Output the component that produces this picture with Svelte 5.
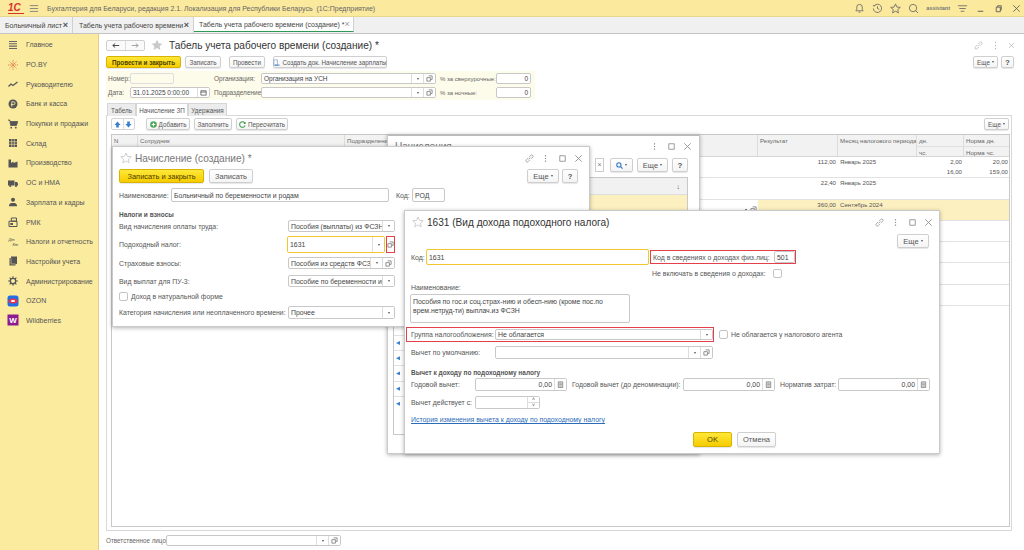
<script>
  const tabs = [
    { title: 'Больничный лист', cls: 'tab-a' },
    { title: 'Табель учета рабочего времени', cls: 'tab-b' },
    { title: 'Табель учета рабочего времени (создание) *', cls: 'tab-c', active: true }
  ];

  const sections = [
    ['lines', 'Главное'],
    ['poby', 'РО.BY'],
    ['trend', 'Руководителю'],
    ['coin', 'Банк и касса'],
    ['cart', 'Покупки и продажи'],
    ['store', 'Склад'],
    ['factory', 'Производство'],
    ['truck', 'ОС и НМА'],
    ['person', 'Зарплата и кадры'],
    ['till', 'РМК'],
    ['tax', 'Налоги и отчетность'],
    ['docs', 'Настройки учета'],
    ['gear', 'Администрирование'],
    ['ozon', 'OZON'],
    ['wb', 'Wildberries']
  ];

  const rows = [
    { result: '112,00', month: 'Январь 2025', d: '2,00', n: '20,00', h: '16,00', nh: '159,00' },
    { result: '22,40', month: 'Январь 2025' },
    { result: '360,00', month: 'Сентябрь 2024', current: true },
    {}, {}, {}, {}
  ];
</script>

{#snippet open()}
  <svg class="ico" viewBox="0 0 8 8"><path d="M3 1h4v4H5.500M1 3h4v4H1z" fill="none" stroke="#666" stroke-width=".8"/></svg>
{/snippet}

{#snippet calc()}
  <svg class="ico" viewBox="0 0 8 8"><path d="M1.500 1h5v6.500h-5zM2.500 2.500h3M2.500 4.200h3M2.500 5.800h3" fill="none" stroke="#666" stroke-width=".8"/></svg>
{/snippet}

{#snippet field(text, opts = {})}
  <div class="fld {opts.cls ?? ''}">
    <span class="val" class:num={opts.num}>{text}</span>
    {#if opts.arrow}<span class="fbtn"><i class="tri"></i></span>{/if}
    {#if opts.open}<span class="fbtn">{@render open()}</span>{/if}
    {#if opts.calc}<span class="fbtn">{@render calc()}</span>{/if}
    {#if opts.date}<span class="fbtn"><svg class="ico" viewBox="0 0 8 8"><path d="M1 2h6v5H1zM1 3.500h6" fill="none" stroke="#555" stroke-width=".9"/></svg></span>{/if}
    {#if opts.spin}<span class="fbtn spin"><i>˄</i><i>˅</i></span>{/if}
  </div>
{/snippet}

{#snippet wincontrols(link = true)}
  <div class="wctl">
    {#if link}
      <svg class="wi" viewBox="0 0 12 12"><path d="M5 7l2-2M4.500 5.500L2.500 7.500a1.400 1.400 0 0 0 2 2l2-2M7.500 6.500l2-2a1.400 1.400 0 0 0-2-2l-2 2" fill="none" stroke="#999" stroke-width=".9"/></svg>
    {/if}
    <svg class="wi" viewBox="0 0 12 12"><path d="M6 2.500v1.200M6 5.400v1.200M6 8.300v1.200" stroke="#888" stroke-width="1.300"/></svg>
    <svg class="wi" viewBox="0 0 12 12"><path d="M3 3h6v6H3z" fill="none" stroke="#888" stroke-width=".9"/></svg>
    <svg class="wi" viewBox="0 0 12 12"><path d="M2.500 2.500l7 7M9.500 2.500l-7 7" stroke="#888" stroke-width=".9"/></svg>
  </div>
{/snippet}

{#snippet star()}
  <svg class="star" viewBox="0 0 12 12"><path d="M6 1l1.500 3.400 3.700.4-2.800 2.400.8 3.600L6 8.900 2.800 10.800l.8-3.600L.8 4.800l3.700-.4z" fill="none" stroke="#c4c4c4" stroke-width=".8"/></svg>
{/snippet}

{#snippet sectionIcon(name)}
  <svg class="si" viewBox="0 0 12 12">
    {#if name === 'lines'}
      <path d="M2 2.500h8M2 4.800h8M2 7.100h8M2 9.500h8" stroke="#666" stroke-width="1.100"/>
    {:else if name === 'poby'}
      <path d="M6 1v10M1 6h10M2.500 2.500l7 7M9.500 2.500l-7 7" stroke="#e0703a" stroke-width=".8" stroke-dasharray="1.500 .7"/>
    {:else if name === 'trend'}
      <path d="M1.500 8.500l2.500-2.500 2 1.500L10.500 4" fill="none" stroke="#555" stroke-width="1.300"/>
    {:else if name === 'coin'}
      <circle cx="6" cy="6" r="4.500" fill="#555"/><path d="M4.800 8.800V3.800h1.800a1.400 1.400 0 0 1 0 2.800H3.800" fill="none" stroke="#fbeb9f" stroke-width=".9"/>
    {:else if name === 'cart'}
      <path d="M1 2h1.800l.8 5.500h5.900l1.200-4H3.200" fill="#555" stroke="#555" stroke-width=".8"/><circle cx="4.200" cy="9.700" r=".9" fill="#555"/><circle cx="8.800" cy="9.700" r=".9" fill="#555"/>
    {:else if name === 'store'}
      <path d="M2 2h8v8H2z" fill="#555"/><path d="M2 4.700h8M2 7.300h8M4.700 2v8M7.300 2v8" stroke="#fbeb9f" stroke-width=".6"/>
    {:else if name === 'factory'}
      <path d="M1.500 10.500V2.500h2.500v3.500l2.500-1.500V6l4-1.500v6z" fill="#555"/>
    {:else if name === 'truck'}
      <path d="M1 3.500h6.500v5H1zM8 5h2l1 1.500v2H8z" fill="#555"/><circle cx="3.200" cy="9" r="1.100" fill="#555"/><circle cx="9" cy="9" r="1.100" fill="#555"/>
    {:else if name === 'person'}
      <circle cx="6" cy="3.700" r="2" fill="#555"/><path d="M2 10.200c0-2.700 1.800-3.200 4-3.200s4 .5 4 3.200z" fill="#555"/>
    {:else if name === 'till'}
      <path d="M2 5.200h8v5.300H2zM4.300 2h5.200v3.200H4.300z" fill="none" stroke="#555" stroke-width="1"/><path d="M3.300 7h2.700v2H3.300z" fill="#555"/>
    {:else if name === 'tax'}
      <text x="1.500" y="5" class="si-t">Дт</text><text x="5.500" y="10" class="si-t">Кт</text>
    {:else if name === 'docs'}
      <path d="M4 1.500h6v7.500H8.500v1.500h-6V3H4z" fill="#555"/><path d="M4 3v6h4.500" fill="none" stroke="#fbeb9f" stroke-width=".5"/>
    {:else if name === 'gear'}
      <circle cx="6" cy="6" r="2.700" fill="none" stroke="#555" stroke-width="1.300"/><path d="M6 1.200v1.800M6 9v1.800M1.200 6H3M9 6h1.800M2.600 2.600l1.300 1.300M8.100 8.100l1.300 1.300M9.400 2.600L8.100 3.900M3.900 8.100L2.600 9.400" stroke="#555" stroke-width="1.100"/>
    {:else if name === 'ozon'}
      <rect x=".5" y=".5" width="11" height="11" rx="2.500" fill="#1f6fe5"/><ellipse cx="6" cy="6" rx="4.500" ry="2.500" fill="#e8304a"/><ellipse cx="6" cy="6" rx="2.200" ry="1" fill="#fff"/>
    {:else if name === 'wb'}
      <rect x=".5" y=".5" width="11" height="11" fill="#8d1b8f"/><text x="6" y="9" class="si-w">W</text>
    {/if}
  </svg>
{/snippet}

<div class="app">
  <header class="topbar">
    <span class="logo">1С</span>
    <svg class="burger" viewBox="0 0 12 10"><path d="M1 1.500h10M1 5h10M1 8.500h10" stroke="#777" stroke-width="1"/></svg>
    <span class="apptitle">Бухгалтерия для Беларуси, редакция 2.1. Локализация для Республики Беларусь&nbsp; (1С:Предприятие)</span>
    <div class="topicons">
      <svg class="ti" viewBox="0 0 12 12"><path d="M6 1.500a3 3 0 0 0-3 3V7L2 8.500h8L9 7V4.500a3 3 0 0 0-3-3zM5 10h2" fill="none" stroke="#666" stroke-width=".9"/></svg>
      <svg class="ti" viewBox="0 0 12 12"><path d="M2.500 3a4.500 4.500 0 1 1-1 3M1 2.500L2.500 3.500 3.500 2M6 3.500V6l2 1" fill="none" stroke="#666" stroke-width=".9"/></svg>
      <svg class="ti" viewBox="0 0 12 12"><path d="M6 1l1.500 3.400 3.700.4-2.800 2.400.8 3.600L6 8.900 2.800 10.800l.8-3.600L.8 4.800l3.700-.4z" fill="none" stroke="#666" stroke-width=".9"/></svg>
      <svg class="ti" viewBox="0 0 12 12"><circle cx="5.500" cy="5.500" r="4" fill="none" stroke="#666" stroke-width=".9"/><path d="M8.500 8.500l2.500 2.500" stroke="#666" stroke-width=".9"/></svg>
      <span class="user">assistant</span>
      <svg class="ti" viewBox="0 0 12 12"><path d="M1 3h10M2.500 6h7M4 9h4" stroke="#666" stroke-width=".9"/></svg>
      <svg class="ti" viewBox="0 0 12 12"><path d="M3 9h6" stroke="#555" stroke-width="1"/></svg>
      <svg class="ti" viewBox="0 0 12 12"><path d="M3.500 4.500h4.500v5H3.500zM5 4.500V3h4v4.500H8" fill="none" stroke="#555" stroke-width=".9"/></svg>
      <svg class="ti" viewBox="0 0 12 12"><path d="M2.500 2.500l7 7M9.500 2.500l-7 7" stroke="#555" stroke-width=".9"/></svg>
    </div>
  </header>

  <nav class="tabbar">
    {#each tabs as t}
      <div class="doctab {t.cls}" class:active={t.active}>
        <span>{t.title}</span><b>×</b>
      </div>
    {/each}
  </nav>

  <div class="body">
    <aside class="side">
      {#each sections as [icon, label]}
        <div class="side-item">
          {@render sectionIcon(icon)}
          <span>{label}</span>
        </div>
      {/each}
    </aside>

    <main class="page">
      <div class="title-row">
        <div class="navbtns">
          <span class="nb"><svg viewBox="0 0 10 8"><path d="M1 4h8M1 4l3-2.500M1 4l3 2.500" fill="none" stroke="#333" stroke-width="1.100"/></svg></span>
          <span class="nb"><svg viewBox="0 0 10 8"><path d="M1 4h8M9 4L6 1.500M9 4L6 6.500" fill="none" stroke="#999" stroke-width="1.100"/></svg></span>
        </div>
        <svg class="bigstar" viewBox="0 0 12 12"><path d="M6 .8l1.600 3.500 3.800.4-2.800 2.500.8 3.800L6 9l-3.400 2 .8-3.800L.6 4.700l3.800-.4z" fill="#c9c9c9"/></svg>
        <h1>Табель учета рабочего времени (создание) *</h1>
        <div class="wctl pale">
          <svg class="wi" viewBox="0 0 12 12"><path d="M5 7l2-2M4.500 5.500L2.500 7.500a1.400 1.400 0 0 0 2 2l2-2M7.500 6.500l2-2a1.400 1.400 0 0 0-2-2l-2 2" fill="none" stroke="#bbb" stroke-width=".9"/></svg>
          <svg class="wi" viewBox="0 0 12 12"><path d="M6 2v1.400M6 5.300v1.400M6 8.600V10" stroke="#bbb" stroke-width="1.200"/></svg>
          <svg class="wi" viewBox="0 0 12 12"><path d="M3.500 3.500l5 5M8.500 3.500l-5 5" stroke="#bbb" stroke-width=".9"/></svg>
        </div>
      </div>

      <div class="cmd-row">
        <button class="btn primary w-post">Провести и закрыть</button>
        <button class="btn w-save">Записать</button>
        <button class="btn w-post2">Провести</button>
        <button class="btn w-create">
          <svg class="ico" viewBox="0 0 8 8"><path d="M1 1h4v6H1z" fill="#fff" stroke="#6a8fc0" stroke-width=".7"/><path d="M2 7h5.500" stroke="#3a70b8"/></svg>
          Создать док. Начисление зарплаты
        </button>
        <div class="right-tools">
          <button class="btn w-more">Еще <i class="tri"></i></button>
          <button class="btn w-help">?</button>
        </div>
      </div>

      <section class="head-form">
        <div class="form-row">
          <label class="col-a" for="doc-no">Номер:</label>
          <input id="doc-no" class="num-input" readonly />
          <span class="lb-org">Организация:</span>
          {@render field('Организация на УСН', { cls: 'org', arrow: true, open: true })}
          <span class="lb-pct">% за сверхурочные:</span>
          {@render field('0', { num: true, cls: 'pct' })}
        </div>
        <div class="form-row">
          <span class="col-a">Дата:</span>
          {@render field('31.01.2025  0:00:00', { cls: 'date', date: true })}
          <span class="lb-org near">Подразделение:</span>
          {@render field('', { cls: 'org', arrow: true, open: true })}
          <span class="lb-pct">% за ночные:</span>
          {@render field('0', { num: true, cls: 'pct' })}
        </div>
      </section>

      <div class="tabstrip">
        <span class="ptab t1">Табель</span>
        <span class="ptab t2 on">Начисление ЗП</span>
        <span class="ptab t3">Удержания</span>
      </div>

      <section class="panel">
        <div class="table-tools">
          <div class="updown">
            <span><svg viewBox="0 0 8 8"><path d="M4 .5L7.500 4.500H5.500V7.500h-3V4.500H.5z" fill="#3a7fd0"/></svg></span>
            <span><svg viewBox="0 0 8 8"><path d="M4 7.500L7.500 3.500H5.500V.5h-3v3H.5z" fill="#3a7fd0"/></svg></span>
          </div>
          <button class="btn w-add">
            <svg class="ico" viewBox="0 0 8 8"><circle cx="4" cy="4" r="3.800" fill="#4aa85a"/><path d="M4 2v4M2 4h4" stroke="#fff" stroke-width="1.200"/></svg>
            Добавить
          </button>
          <button class="btn w-fill">Заполнить</button>
          <button class="btn w-calc">
            <svg class="ico" viewBox="0 0 8 8"><path d="M6.800 2.500A3.200 3.200 0 1 0 7 5" fill="none" stroke="#3d9a4e" stroke-width="1.200"/><path d="M7.500.8v2.500H5z" fill="#3d9a4e"/></svg>
            Пересчитать
          </button>
          <button class="btn w-more table-more">Еще <i class="tri"></i></button>
        </div>

        <div class="grid">
          <div class="gr ghead">
            <span>N</span><span>Сотрудник</span><span>Подразделение</span><span>Результат</span>
            <span>Месяц налогового периода</span>
            <span class="split"><em>дн.</em><em>чс.</em></span>
            <span class="split"><em>Норма дн.</em><em>Норма чс.</em></span>
          </div>
          {#each rows as r}
            <div class="gr grow" class:current={r.current}>
              <span></span><span></span>
              <span class="dept">
                {#if r.current}<i class="cellbtns"><i class="tri"></i>{@render open()}</i>{/if}
              </span>
              <span class="r">{r.result ?? ''}</span>
              <span>{r.month ?? ''}</span>
              <span class="r split"><em>{r.d ?? ''}</em><em>{r.h ?? ''}</em></span>
              <span class="r split"><em>{r.n ?? ''}</em><em>{r.nh ?? ''}</em></span>
            </div>
          {/each}
        </div>
      </section>

      <div class="foot-row">
        <span class="lb-resp">Ответственное лицо:</span>
        {@render field('', { cls: 'resp', arrow: true, open: true })}
      </div>
    </main>
  </div>

  <!-- window behind: pick list -->
  <section class="win win-back">
    <div class="winhead">
      <span class="wtitle dim">Начисления</span>
      {@render wincontrols(false)}
    </div>
    <div class="back-tools">
      <span class="clearbox">×</span>
      <button class="btn w-find">
        <svg class="ico" viewBox="0 0 8 8"><circle cx="3.300" cy="3.300" r="2.400" fill="none" stroke="#2f74c4" stroke-width="1.200"/><path d="M5 5l2.500 2.500" stroke="#2f74c4" stroke-width="1.200"/></svg>
        <i class="tri"></i>
      </button>
      <button class="btn w-more2">Еще <i class="tri"></i></button>
      <button class="btn w-help2">?</button>
    </div>
    <div class="back-table">
      <div class="back-head"><span>↓</span></div>
      <div class="back-sel"></div>
      <div class="back-spacer"></div>
      {#each [0, 1, 2, 3, 4] as i}
        <div class="back-row"><i class="mark"></i></div>
      {/each}
    </div>
  </section>

  <!-- accrual window -->
  <section class="win win-acc">
    <div class="winhead">
      {@render star()}
      <span class="wtitle dim">Начисление (создание) *</span>
      {@render wincontrols()}
    </div>
    <div class="acc-tools">
      <button class="btn primary big w-wc">Записать и закрыть</button>
      <button class="btn big w-w">Записать</button>
      <div class="right-tools">
        <button class="btn big w-m">Еще <i class="tri"></i></button>
        <button class="btn big w-q">?</button>
      </div>
    </div>
    <div class="acc-name">
      <span class="lb-name">Наименование:</span>
      {@render field('Больничный по беременности и родам', { cls: 'name' })}
      <span class="lb-code">Код:</span>
      {@render field('РОД', { cls: 'code' })}
    </div>
    <h3 class="group g-acc">Налоги и взносы</h3>
    <div class="acc-row r1"><span>Вид начисления оплаты труда:</span>{@render field('Пособия (выплаты) из ФСЗН', { arrow: true })}</div>
    <div class="acc-row r2">
      <span>Подоходный налог:</span>
      {@render field('1631', { arrow: true, cls: 'focus' })}
      <span class="redbtn">{@render open()}</span>
    </div>
    <div class="acc-row r3"><span>Страховые взносы:</span>{@render field('Пособия из средств ФСЗН', { arrow: true, open: true })}</div>
    <div class="acc-row r4"><span>Вид выплат для ПУ-3:</span>{@render field('Пособие по беременности и родам', { arrow: true })}</div>
    <div class="acc-check"><i class="check"></i><span>Доход в натуральной форме</span></div>
    <div class="acc-row r5"><span>Категория начисления или неоплаченного времени:</span>{@render field('Прочее', { arrow: true })}</div>
  </section>

  <!-- income type window -->
  <section class="win win-inc">
    <div class="winhead">
      {@render star()}
      <span class="wtitle strong">1631 (Вид дохода подоходного налога)</span>
      {@render wincontrols()}
    </div>
    <div class="inc-more">
      <button class="btn big w-m">Еще <i class="tri"></i></button>
    </div>
    <div class="inc-code">
      <span class="lb-k">Код:</span>
      {@render field('1631', { cls: 'focus k' })}
      <div class="redbox rb-code">
        <span class="lb">Код в сведениях о доходах физ.лиц:</span>
        {@render field('501', { cls: 'c501' })}
      </div>
    </div>
    <div class="inc-excl"><span>Не включать в сведения о доходах:</span><i class="check"></i></div>
    <div class="lb-full">Наименование:</div>
    <div class="textarea">Пособия по гос.и соц.страх-нию и обесп-нию (кроме пос.по врем.нетруд-ти) выплач.из ФСЗН</div>
    <div class="inc-group">
      <div class="redbox rb-group">
        <span class="lb">Группа налогообложения:</span>
        {@render field('Не облагается', { arrow: true, cls: 'grp' })}
      </div>
      <i class="check"></i>
      <span class="lb-agent">Не облагается у налогового агента</span>
    </div>
    <div class="inc-def">
      <span class="lb">Вычет по умолчанию:</span>
      {@render field('', { arrow: true, open: true, cls: 'grp' })}
    </div>
    <h3 class="group g-inc">Вычет к доходу по подоходному налогу</h3>
    <div class="inc-amounts">
      <span class="l1">Годовой вычет:</span>
      {@render field('0,00', { num: true, calc: true, cls: 'a1' })}
      <span class="l2">Годовой вычет (до деноминации):</span>
      {@render field('0,00', { num: true, calc: true, cls: 'a2' })}
      <span class="l3">Норматив затрат:</span>
      {@render field('0,00', { num: true, calc: true, cls: 'a2' })}
    </div>
    <div class="inc-from">
      <span class="l1">Вычет действует с:</span>
      {@render field('', { spin: true, cls: 'since' })}
    </div>
    <a class="hist" href="#history">История изменения вычета к доходу по подоходному налогу</a>
    <div class="inc-foot">
      <button class="btn primary big w-ok">OK</button>
      <button class="btn big w-cancel">Отмена</button>
    </div>
  </section>
</div>

<style>
  :global(body) { margin: 0; background: #fff; }
  .app {
    position: relative;
    width: 1024px;
    height: 550px;
    overflow: hidden;
    font-family: "Liberation Sans", Arial, sans-serif;
    font-size: 7px;
    color: #555;
    background: #fff;
  }

  /* top bars */
  .topbar {
    display: flex;
    align-items: center;
    height: 16px;
    background: #fbe99e;
    border-bottom: 1px solid #e6d690;
  }
  .logo {
    width: 16px;
    margin-left: 8px;
    color: #d6322a;
    font-weight: bold;
    font-style: italic;
    font-size: 10px;
    border-bottom: 1px solid #d6322a;
    line-height: 10px;
  }
  .burger { width: 10px; height: 9px; margin-left: 5px; }
  .apptitle { margin-left: 8px; font-size: 7px; color: #666; white-space: nowrap; }
  .topicons { display: flex; align-items: center; margin-left: auto; gap: 7px; padding-right: 2px; }
  .ti { width: 11px; height: 11px; }
  .user { font-size: 5.500px; font-weight: bold; color: #777; }

  .tabbar {
    display: flex;
    height: 16px;
    background: #f0f0f0;
    border-bottom: 1px solid #c4c4c4;
  }
  .doctab {
    display: flex;
    align-items: center;
    justify-content: space-between;
    box-sizing: border-box;
    padding: 0 4px 0 5px;
    font-size: 7px;
    color: #444;
    border-right: 1px solid #d0d0d0;
    white-space: nowrap;
  }
  .doctab b { font-size: 9px; color: #555; font-weight: bold; }
  .tab-a { width: 73px; }
  .tab-b { width: 121px; padding-left: 6px; }
  .tab-c { width: 160px; }
  .doctab.active { background: #fff; border-bottom: 1px solid #2a9a54; height: 15px; }
  .doctab.active b { font-weight: normal; color: #999; }

  .body { display: flex; height: 517px; }
  .side {
    flex: none;
    width: 99px;
    box-sizing: border-box;
    padding-top: 1px;
    background: #fbeb9f;
    border-right: 1px solid #e2d184;
    overflow: hidden;
  }
  .side-item {
    display: flex;
    align-items: center;
    gap: 7px;
    height: 19.700px;
    padding-left: 7px;
    font-size: 7px;
    color: #555;
    white-space: nowrap;
  }
  .si { width: 12px; height: 12px; flex: none; }
  .si-t { font-size: 4px; font-style: italic; fill: #444; }
  .si-w { font-size: 8px; font-weight: bold; fill: #fff; text-anchor: middle; }

  /* document form */
  .page { flex: 1; min-width: 0; padding: 5px 10px 0 7px; }
  .title-row { display: flex; align-items: center; height: 12px; }
  .navbtns { display: flex; width: 39px; height: 11px; border: 1px solid #cfcfcf; border-radius: 2px; box-sizing: border-box; background: #fafafa; }
  .nb { flex: 1; display: flex; align-items: center; justify-content: center; }
  .nb + .nb { border-left: 1px solid #ddd; }
  .nb svg { width: 8px; height: 7px; }
  .bigstar { width: 12px; height: 12px; margin-left: 6px; }
  h1 { margin: 0 0 0 6px; font-size: 10.100px; font-weight: normal; color: #333; white-space: nowrap; }
  .wctl { display: flex; align-items: center; margin-left: auto; gap: 5.500px; }
  .wctl.pale { margin-right: -3px; }
  .wi { width: 11px; height: 11px; }

  .btn {
    box-sizing: border-box;
    height: 12px;
    padding: 0;
    display: inline-flex;
    align-items: center;
    justify-content: center;
    gap: 2px;
    font: inherit;
    font-size: 6.300px;
    color: #555;
    background: linear-gradient(#fff, #f4f4f4);
    border: 1px solid #cfcfcf;
    border-radius: 2px;
    box-shadow: 0 1px 1px rgba(0, 0, 0, .1);
    white-space: nowrap;
  }
  .btn.big { height: 14px; font-size: 7.500px; }
  .btn.primary {
    color: #4a3f00;
    background: linear-gradient(#ffe83a, #f5cc00);
    border-color: #d8b400;
  }
  .ico { width: 7px; height: 7px; flex: none; }
  .tri { display: inline-block; width: 0; height: 0; border: 1.500px solid transparent; border-top: 2px solid #555; border-bottom: 0; }

  .cmd-row { display: flex; align-items: center; height: 12px; margin-top: 5px; }
  .w-post { width: 75px; font-weight: bold; }
  .w-save { width: 36px; margin-left: 4px; }
  .w-post2 { width: 36px; margin-left: 8px; }
  .w-create { width: 114px; margin-left: 8px; }
  .right-tools { display: flex; gap: 3px; margin-left: auto; }
  .w-more { width: 25px; }
  .w-help { width: 13px; font-size: 8px; font-weight: bold; }

  .head-form { width: 425px; margin-top: 3px; padding: 2px 2px 2px; background: #fdfbe9; }
  .form-row { display: flex; align-items: center; height: 11px; font-size: 6.500px; }
  .form-row + .form-row { margin-top: 3px; }
  .col-a { width: 22px; color: #666; }
  .num-input { box-sizing: border-box; width: 44px; height: 11px; padding: 0; border: 1px solid #ddd; border-radius: 2px; background: #fdfbe9; }
  .lb-org { margin-left: 40px; width: 47px; white-space: nowrap; color: #666; }
  .lb-org.near { margin-left: 4px; }
  .lb-pct { margin-left: 4px; width: 56px; white-space: nowrap; color: #666; font-size: 6px; }

  .fld {
    box-sizing: border-box;
    display: flex;
    align-items: stretch;
    height: 100%;
    background: #fff;
    border: 1px solid #c8c8c8;
    border-radius: 2px;
    color: #444;
    min-width: 0;
  }
  .val { flex: 1; min-width: 0; padding: 0 2px; overflow: hidden; white-space: nowrap; display: flex; align-items: center; }
  .val.num { justify-content: flex-end; }
  .fbtn { flex: none; width: 11px; display: flex; align-items: center; justify-content: center; border-left: 1px solid #ddd; background: #fff; font-size: 6px; }
  .fbtn.spin { flex-direction: column; }
  .fbtn.spin i { flex: 1; width: 100%; text-align: center; font-style: normal; line-height: 5px; font-size: 5px; }
  .fbtn.spin i + i { border-top: 1px solid #ddd; }
  .org { width: 175px; }
  .pct { width: 35px; }
  .date { width: 80px; }

  .tabstrip { display: flex; height: 12px; margin-top: 3px; font-size: 6.300px; white-space: nowrap; }
  .ptab { box-sizing: border-box; display: flex; align-items: center; justify-content: center; height: 13px; background: #ececec; border: 1px solid #d6d6d6; border-bottom: 0; color: #555; }
  .ptab.on { background: #fff; position: relative; z-index: 1; }
  .t1 { width: 29px; margin-left: 1px; }
  .t2 { width: 52px; }
  .t3 { width: 39px; }

  .panel { box-sizing: border-box; width: 906px; height: 416px; border: 1px solid #d8d8d8; padding: 2px 2px 3px 4px; }
  .table-tools { display: flex; align-items: center; height: 12px; }
  .updown { display: flex; width: 24px; height: 12px; box-sizing: border-box; border: 1px solid #d4d4d4; border-radius: 2px; }
  .updown span { flex: 1; display: flex; align-items: center; justify-content: center; }
  .updown span + span { border-left: 1px solid #ddd; }
  .updown svg { width: 7px; height: 7px; }
  .w-add { width: 44px; margin-left: 11px; }
  .w-fill { width: 38px; margin-left: 4px; }
  .w-calc { width: 52px; margin-left: 4px; }
  .table-more { margin-left: auto; }

  .grid { box-sizing: border-box; width: 899px; height: 393px; margin-top: 4px; border: 1px solid #c8c8c8; font-size: 6.100px; overflow: hidden; }
  .gr { display: grid; grid-template-columns: 26px 207px 413px 80px 79px 47px 46px; }
  .ghead { height: 21px; background: #f2f2f2; border-bottom: 1px solid #d6d6d6; color: #666; }
  .ghead > span { padding: 2px 2px; border-right: 1px solid #dcdcdc; white-space: nowrap; overflow: hidden; }
  .ghead .split { padding: 0; }
  .split { display: flex; flex-direction: column; }
  .split em { flex: 1; font-style: normal; padding: 2px; line-height: 7px; }
  .ghead .split em + em { border-top: 1px solid #e0e0e0; }
  .grow { height: 20.300px; border-bottom: 1px solid #e2e2e2; color: #555; }
  .grow > span { padding: 1px 2px; white-space: nowrap; line-height: 8px; }
  .grow .split { padding: 0; }
  .grow .split em { padding: 1px 2px; }
  .r { text-align: right; }
  .dept { position: relative; }
  .current > span:nth-child(n + 4) { background: #fdf0c0; }
  .cellbtns { position: absolute; right: 0; top: 0; bottom: 0; display: flex; align-items: center; gap: 3px; padding: 0 1px 0 3px; background: #fff; }

  .foot-row { display: flex; align-items: center; height: 11px; margin-top: 4px; font-size: 6.300px; color: #666; }
  .lb-resp { width: 60px; white-space: nowrap; }
  .resp { width: 175px; }

  /* floating windows */
  .win {
    position: absolute;
    box-sizing: border-box;
    background: #fff;
    border: 1px solid #cacaca;
    box-shadow: 0 1px 4px rgba(0, 0, 0, .3);
    font-size: 6.900px;
  }
  .winhead { display: flex; align-items: center; height: 22px; padding: 0 5px 0 7px; }
  .wtitle { font-size: 10.100px; white-space: nowrap; }
  .wtitle.dim { color: #777; }
  .wtitle.strong { color: #333; }
  .star { width: 12px; height: 12px; margin-right: 3px; }
  .check { display: block; box-sizing: border-box; width: 9px; height: 9px; background: #fff; border: 1px solid #c4c4c4; border-radius: 2px; flex: none; }
  .redbox { box-sizing: border-box; border: 1.500px solid #e2404a; display: flex; align-items: center; }
  .group { margin: 0; font-size: 6.500px; font-weight: bold; color: #555; }

  .win-back { left: 387px; top: 134px; width: 313px; height: 320px; border-top: 2px solid #bbb; }
  .win-back .winhead { height: 20px; padding-right: 6px; padding-left: 7px; }
  .back-tools { display: flex; align-items: center; justify-content: flex-end; gap: 4px; height: 14px; padding-right: 11px; margin-top: 2px; }
  .clearbox { box-sizing: border-box; width: 9px; height: 14px; border: 1px solid #ccc; text-align: center; line-height: 12px; color: #777; margin-right: 2px; }
  .btn.w-find { width: 23px; height: 14px; }
  .btn.w-more2 { width: 31px; height: 14px; font-size: 7.500px; }
  .btn.w-help2 { width: 16px; height: 14px; font-size: 8px; font-weight: bold; }
  .back-table { box-sizing: border-box; width: 295px; height: 258px; margin: 5px 0 0 5px; border: 1px solid #c8c8c8; }
  .back-head { height: 16px; background: #f1f1f1; border-bottom: 1px solid #ddd; display: flex; justify-content: flex-end; align-items: center; padding-right: 7px; }
  .back-sel { height: 17px; background: #fdf0c0; }
  .back-spacer { height: 123px; }
  .back-row { height: 15.200px; border-top: 1px solid #e2e2e2; display: flex; align-items: center; padding-left: 2px; box-sizing: border-box; }
  .mark { width: 4px; height: 4px; background: #3a7fd0; clip-path: polygon(0 50%, 100% 0, 100% 100%); }

  .win-acc { left: 112px; top: 146px; width: 478px; height: 181px; padding: 0; }
  .win-acc > .acc-tools, .win-acc > .acc-name, .win-acc > .acc-row, .win-acc > .acc-check, .win-acc > .group { margin-left: 6px; }
  .win-acc .winhead { padding-right: 5px; }
  .acc-tools { display: flex; align-items: center; height: 14px; margin-right: 11px; }
  .w-wc { width: 85px; }
  .w-w { width: 44px; margin-left: 5px; }
  .w-m { width: 32px; }
  .w-q { width: 16px; font-weight: bold; }
  .acc-name { display: flex; align-items: center; height: 14px; margin-top: 5px; }
  .lb-name { width: 52px; white-space: nowrap; }
  .name { width: 218px; }
  .lb-code { margin-left: 7px; width: 16px; }
  .code { width: 33px; }
  .g-acc { margin-top: 8px; line-height: 10px; }
  .acc-row { display: flex; align-items: center; height: 12px; margin-right: 194px; }
  .acc-row > span:first-child { width: 169px; white-space: nowrap; flex: none; }
  .acc-row > :global(.fld) { flex: none; width: 107px; }
  .r2 { height: 17px; margin-top: 4px; }
  .r2 > :global(.fld.focus) { width: 98px; height: 17px; border: 1px solid #f5c52e; margin-left: -1px; }
  .redbtn { box-sizing: border-box; width: 12px; height: 17px; margin-left: 1px; border: 1.500px solid #e2404a; display: flex; align-items: center; justify-content: center; }
  .r3 { margin-top: 4px; }
  .r4 { margin-top: 6px; }
  .acc-check { display: flex; align-items: center; gap: 3px; height: 9px; margin-top: 5px; }
  .r5 { margin-top: 5px; height: 13px; }

  .win-inc { left: 404px; top: 210px; width: 536px; height: 244px; }
  .inc-more { display: flex; justify-content: flex-end; height: 14px; padding-right: 10px; margin-top: 1px; }
  .inc-code { display: flex; align-items: center; height: 16px; margin: 1px 0 0 6px; }
  .lb-k { width: 15px; }
  .inc-code > :global(.k) { width: 223px; flex: none; border: 1px solid #f5c52e; }
  .rb-code { width: 146px; height: 14px; margin-left: 1px; padding-left: 2px; white-space: nowrap; flex: none; }
  .rb-code > .lb { width: 121px; flex: none; }
  .rb-code > :global(.c501) { flex: 1; }
  .inc-excl { display: flex; align-items: center; height: 9px; margin: 4px 0 0 247px; }
  .inc-excl > span { width: 121px; flex: none; white-space: nowrap; }
  .lb-full { margin: 5px 0 0 6px; height: 9px; line-height: 9px; }
  .textarea {
    box-sizing: border-box;
    width: 220px;
    height: 29px;
    margin: 2px 0 0 5px;
    padding: 2px;
    border: 1px solid #c8c8c8;
    border-radius: 2px;
    line-height: 9px;
    color: #444;
  }
  .inc-group { display: flex; align-items: center; height: 15px; margin: 4px 0 0 1px; }
  .rb-group { width: 308px; height: 15px; padding: 1px 0 1px 4px; flex: none; margin-right: 5px; }
  .rb-group > .lb { width: 84px; flex: none; white-space: nowrap; }
  .rb-group > :global(.fld.grp) { flex: 1; }
  .inc-def > :global(.fld.grp) { flex: 1; }
  .lb-agent { margin-left: 3px; }
  .inc-def { display: flex; align-items: center; height: 13px; width: 302px; margin: 4px 0 0 6px; }
  .inc-def > .lb { width: 84px; flex: none; }
  .g-inc { margin: 9px 0 0 6px; height: 9px; line-height: 9px; }
  .inc-amounts { display: flex; align-items: center; height: 13px; margin: 1px 0 0 6px; white-space: nowrap; }
  .l1 { width: 64px; flex: none; }
  .inc-amounts > :global(.a1), .inc-amounts > :global(.a2) { width: 92px; flex: none; }
  .l2 { margin-left: 5px; width: 111px; flex: none; }
  .l3 { margin-left: 5px; width: 58px; flex: none; }
  .inc-from { display: flex; align-items: center; height: 13px; margin: 5px 0 0 6px; white-space: nowrap; }
  .since { width: 65px; }
  .hist { display: block; margin: 6px 0 0 6px; color: #2b6cb8; line-height: 9px; }
  .inc-foot { display: flex; gap: 5px; justify-content: flex-end; margin: 8px 163px 0 0; }
  .inc-foot .btn { height: 15px; width: 39px; }
</style>
